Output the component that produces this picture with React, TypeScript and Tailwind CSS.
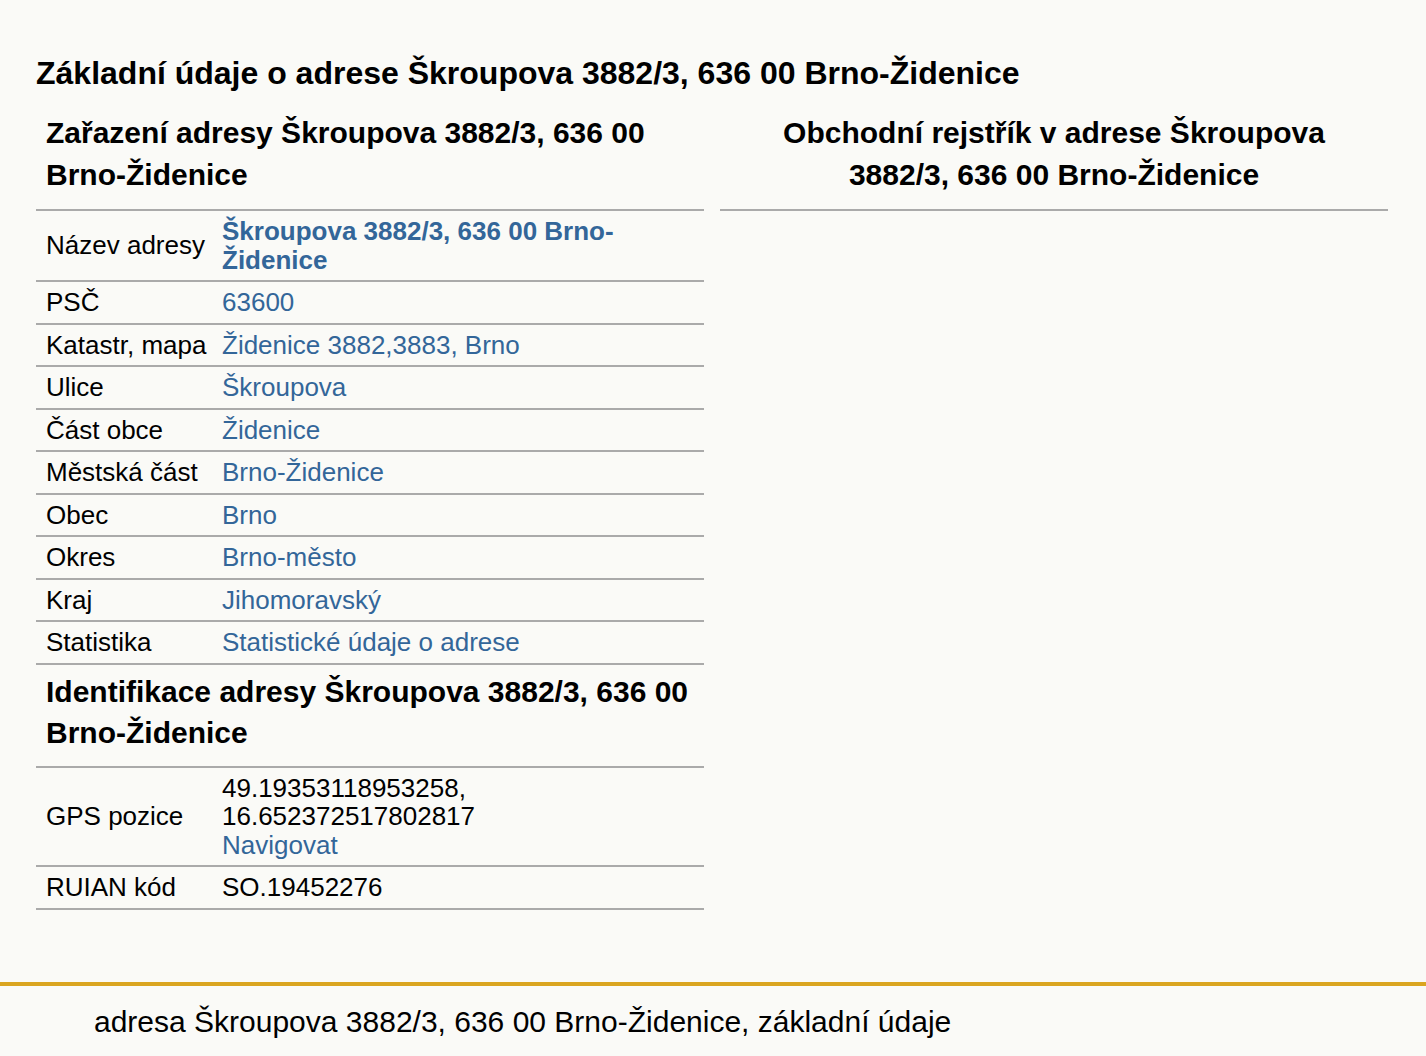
const rows: { label: string; value: string }[] = [
  { label: "PSČ", value: "63600" },
  { label: "Katastr, mapa", value: "Židenice 3882,3883, Brno" },
  { label: "Ulice", value: "Škroupova" },
  { label: "Část obce", value: "Židenice" },
  { label: "Městská část", value: "Brno-Židenice" },
  { label: "Obec", value: "Brno" },
  { label: "Okres", value: "Brno-město" },
  { label: "Kraj", value: "Jihomoravský" },
  { label: "Statistika", value: "Statistické údaje o adrese" },
];

function Row({ label, children }: { label: string; children: React.ReactNode }) {
  return (
    <div className="grid grid-cols-[186px_1fr] border-b-2 border-[#aaaaaa] items-center py-[6px]">
      <div className="pl-[10px]">{label}</div>
      <div className="pr-[60px]">{children}</div>
    </div>
  );
}

export default function App() {
  return (
    <div className="min-h-screen bg-[#fafaf7] text-black font-['Liberation_Sans',Arial,sans-serif]">
      <main className="px-[36px] pt-[54px] pb-[72px]">
        <h2 className="text-[32px] font-bold leading-[38px]">
          Základní údaje o adrese Škroupova 3882/3, 636 00 Brno-Židenice
        </h2>
        <div className="grid grid-cols-[668px_668px] gap-[16px] mt-[20px]">
          <section className="text-[26px] leading-[28.5px]">
            <h3 className="px-[10px] pb-[13px] text-[30px] font-bold leading-[42px] border-b-2 border-[#aaaaaa]">
              Zařazení adresy Škroupova 3882/3, 636 00 Brno-Židenice
            </h3>
            <Row label="Název adresy">
              <a className="font-bold text-[#336699]" href="#">
                Škroupova 3882/3, 636 00 Brno-Židenice
              </a>
            </Row>
            {rows.map((r) => (
              <Row key={r.label} label={r.label}>
                <a className="text-[#336699]" href="#">
                  {r.value}
                </a>
              </Row>
            ))}
            <h3 className="px-[10px] pt-[6px] pb-[13px] text-[30px] font-bold leading-[41px] border-b-2 border-[#aaaaaa]">
              Identifikace adresy Škroupova 3882/3, 636 00 Brno-Židenice
            </h3>
            <Row label="GPS pozice">
              <div>49.19353118953258,</div>
              <div>16.652372517802817</div>
              <a className="text-[#336699]" href="#">
                Navigovat
              </a>
            </Row>
            <Row label="RUIAN kód">SO.19452276</Row>
          </section>
          <section>
            <h3 className="px-[10px] pb-[13px] text-center text-[30px] font-bold leading-[42px] border-b-2 border-[#aaaaaa]">
              Obchodní rejstřík v adrese Škroupova 3882/3, 636 00 Brno-Židenice
            </h3>
          </section>
        </div>
      </main>
      <footer className="border-t-4 border-[#daa520] px-[94px] pt-[18px] pb-[16px]">
        <p className="text-[30px] leading-[36px]">
          adresa Škroupova 3882/3, 636 00 Brno-Židenice, základní údaje
        </p>
      </footer>
    </div>
  );
}
